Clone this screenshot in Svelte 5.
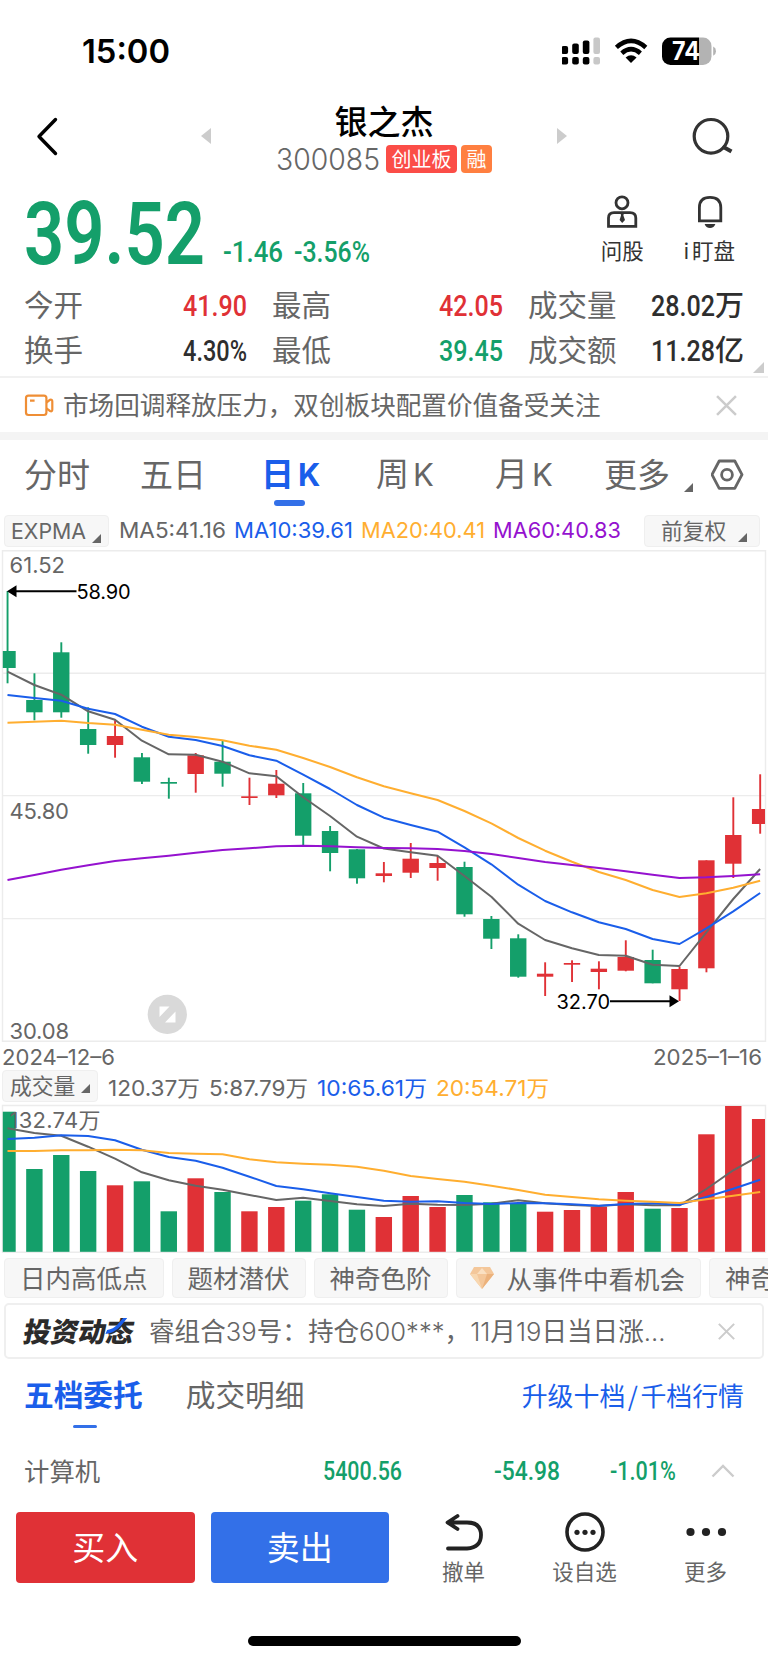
<script lang="ts">
  // one row per session: high, body top, body bottom, low, volume top
  const sessions: { up?: boolean; k: number[]; vol: number }[] = [
    { k: [591, 651, 668, 683.3], vol: 1111.7 },
    { k: [673.3, 700, 712.3, 720.3], vol: 1169 },
    { k: [642.3, 652.3, 712.3, 717.7], vol: 1155 },
    { k: [707.3, 729, 745, 753.7], vol: 1171 },
    { up: true, k: [720.3, 736, 745, 757.7], vol: 1185.3 },
    { k: [753, 757.3, 781.7, 784], vol: 1181.3 },
    { k: [777.7, 782, 783.7, 798.7], vol: 1211.3 },
    { up: true, k: [753, 755.3, 774, 792.7], vol: 1178.3 },
    { k: [741, 761.7, 773.7, 786.7], vol: 1192 },
    { up: true, k: [777.7, 796.3, 798, 805], vol: 1211.3 },
    { up: true, k: [770, 783.7, 795.3, 798], vol: 1207 },
    { k: [783, 793.3, 835.7, 845.3], vol: 1200.7 },
    { k: [826, 831, 853, 871.3], vol: 1194.3 },
    { k: [849, 849.3, 878.3, 883.7], vol: 1209.7 },
    { up: true, k: [862, 873.3, 876, 882.3], vol: 1217 },
    { up: true, k: [843, 858.7, 872.7, 878], vol: 1196 },
    { up: true, k: [856, 863, 868, 880.7], vol: 1207 },
    { k: [861.7, 867, 914.3, 916.7], vol: 1195 },
    { k: [916, 919, 938.7, 949], vol: 1202.3 },
    { k: [934.3, 938.3, 976.7, 977.7], vol: 1204 },
    { up: true, k: [962.3, 973.7, 976.7, 996], vol: 1211.7 },
    { up: true, k: [960.3, 963, 964.7, 982], vol: 1210 },
    { up: true, k: [961.3, 968.7, 972, 989.3], vol: 1206.7 },
    { up: true, k: [940.3, 957, 970.7, 971.3], vol: 1192 },
    { k: [949.7, 960, 983.3, 983.3], vol: 1208.7 },
    { up: true, k: [966.7, 969, 989.3, 1001], vol: 1208 },
    { up: true, k: [860.3, 860.3, 968.3, 972.3], vol: 1134.3 },
    { up: true, k: [797.3, 835, 863.7, 878], vol: 1106 },
    { up: true, k: [774.3, 809, 824, 833.7], vol: 1119 },
  ];

  const priceLines = [
    { name: "ma5", ys: [671.7, 685, 694.7, 711.3, 719.7, 740.7, 754.3, 754.7, 761.7, 773.3, 776.3, 797.3, 816, 836.7, 848.5, 852.3, 855.7, 876, 896.7, 923.7, 940, 948.3, 955, 955.7, 964.7, 966, 932.3, 899, 869] },
    { name: "ma10", ys: [695, 698, 700.7, 708.7, 714, 726.7, 736.7, 740, 746, 755.3, 760.7, 774.7, 789, 805, 817.7, 825, 831.7, 847.3, 864.3, 884.7, 901, 912.3, 922.3, 929, 939, 944, 928.3, 911.3, 893] },
    { name: "ma20", ys: [722.7, 721.7, 720.7, 723, 724.7, 729.7, 734.7, 737, 740.3, 745.7, 749.7, 758, 767, 777.3, 786.3, 793.3, 800, 811, 823.3, 838, 850.7, 861.7, 872, 880, 890, 897, 893.3, 887.7, 880.7] },
    { name: "ma60", ys: [880, 875, 869.7, 865.3, 861, 858.3, 855.7, 852.7, 850, 848.3, 846.3, 845.7, 846.3, 847.3, 848, 848.3, 849, 851, 854, 858, 862, 865, 868, 871.3, 874.7, 878, 877.3, 876, 874.3] },
  ];

  const volumeLines = [
    { name: "ma5", ys: [1128.3, 1133, 1135.7, 1146.7, 1158.7, 1172.3, 1180.3, 1185.7, 1189.7, 1195, 1200, 1197.7, 1201, 1204.3, 1206, 1203.7, 1204.7, 1205, 1203.7, 1200.3, 1203.3, 1205, 1206, 1204.3, 1205.3, 1205.3, 1189, 1170.3, 1155.3] },
    { name: "ma10", ys: [1139, 1137.7, 1135.3, 1136, 1140.3, 1149.7, 1157, 1160.7, 1167.7, 1176.7, 1186, 1189.3, 1193.3, 1197, 1200.7, 1201.7, 1201.3, 1203, 1204, 1203, 1203.3, 1204.3, 1205.7, 1204, 1203.3, 1204.7, 1197, 1188.7, 1179.7] },
    { name: "ma20", ys: [1151, 1151, 1150.3, 1150.3, 1149.7, 1150.3, 1153, 1153.7, 1154.3, 1159.3, 1162.3, 1163.7, 1164.7, 1166.7, 1170.7, 1176, 1179, 1181.7, 1185.7, 1190, 1194.7, 1197, 1199.3, 1200.7, 1201.7, 1203, 1199.3, 1195.7, 1192] },
  ];

  const grid = [673.3, 795.6, 918.6];

  const x = (i: number) => 7.5 + i * 26.88;
  const left = (i: number) => Math.max(x(i) - 8.2, 2.8);
  const right = (i: number) => Math.min(x(i) + 8.2, 765);
  const points = (ys: number[]) => ys.map((y, i) => `${x(i)},${y}`).join(" ");

  const periods = ["分时", "五日", "日K", "周K", "月K", "更多"];
  const tags = ["日内高低点", "题材潜伏", "神奇色阶"];
</script>

{#snippet fit(text: string, width: number, size: number, tone: string, face = "din")}
  <svg class="fit {face} {tone}" {width} height={size}>
    <text x="0" y={size * 0.86} font-size={size} textLength={width} lengthAdjust="spacingAndGlyphs">{text}</text>
  </svg>
{/snippet}

{#snippet corner()}
  <svg class="corner" width="9" height="9" viewBox="0 0 9 9"><path d="M9 0V9H0Z" /></svg>
{/snippet}

{#snippet cross(size: number)}
  <svg class="cross" width={size} height={size} viewBox="0 0 20 20"><path d="M1 1 19 19M19 1 1 19" /></svg>
{/snippet}

<main>
  <header class="status">
    {@render fit("15:00", 88, 33, "black", "sf semi")}
    <svg width="156" height="30" viewBox="562 36 156 30">
      <g>
        <rect x="561.5" y="46" width="6.6" height="8" rx="2" />
        <rect x="572.2" y="43.5" width="6.6" height="10.5" rx="2" />
        <rect x="582.8" y="40.5" width="6.6" height="13.5" rx="2" />
        <rect x="561.5" y="57" width="6.6" height="7.5" rx="2" />
        <rect x="572.2" y="57" width="6.6" height="7.5" rx="2" />
        <rect x="582.8" y="57" width="6.6" height="7.5" rx="2" />
      </g>
      <g fill="#c8c8c8">
        <rect x="593.4" y="37.5" width="6.6" height="16.5" rx="2" />
        <rect x="593.4" y="57" width="6.6" height="7.5" rx="2" />
      </g>
      <g fill="none" stroke="#000" stroke-width="4.6">
        <path d="M616.4 47.4Q631 34.4 645.8 47.4" />
        <path d="M621.8 53.2Q631 45.2 640.4 53.2" />
      </g>
      <path d="M625.6 57.4Q631 53 636.6 57.4L631 63Z" />
      <clipPath id="battery"><rect x="662" y="37.5" width="49.5" height="27.5" rx="8.5" /></clipPath>
      <g clip-path="url(#battery)">
        <rect x="662" y="37" width="37" height="29" />
        <rect x="699" y="37" width="14" height="29" fill="#b3b3b3" />
      </g>
      <path d="M713.2 46.6Q716 48 716 51.2T713.2 55.8Z" fill="#b3b3b3" />
      <text class="level" x="672" y="60" textLength="28" lengthAdjust="spacingAndGlyphs">74</text>
    </svg>
  </header>

  <nav class="title-bar">
    <svg width="24" height="40" viewBox="37 115 24 40"><path class="back" d="M56.5 118.5 40 135.5 56.5 152.5" /></svg>
    <svg class="prev" width="10" height="16"><path d="M10 0V16L0 8Z" fill="#ccc" /></svg>
    <div class="title">
      <h1>银之杰</h1>
      <div class="code">
        {@render fit("300085", 104, 30, "grey", "sf light")}
        <span class="badge board">创业板</span>
        <span class="badge margin">融</span>
      </div>
    </div>
    <svg class="next" width="10" height="16"><path d="M0 0V16L10 8Z" fill="#ccc" /></svg>
    <svg width="42" height="42" viewBox="691 114 42 42">
      <g fill="none" stroke="#333" stroke-width="3.2">
        <circle cx="711" cy="135.3" r="16.8" />
        <path d="M722.5 145.5 731.5 150.5" stroke-width="4" />
      </g>
    </svg>
  </nav>

  <section class="quote">
    <div class="price">
      {@render fit("39.52", 181, 87, "green", "din big")}
      {@render fit("-1.46", 60, 30, "green")}
      {@render fit("-3.56%", 76, 30, "green")}
    </div>
    <div class="tool ask">
      <svg width="32" height="34" viewBox="606 196 32 34" fill="none" stroke="#333" stroke-width="2.8">
        <circle cx="622" cy="203.8" r="6" />
        <path d="M608.5 227.4V219Q608.5 213.6 614 213.6H630Q635.8 213.6 635.8 219V227.4Z" />
        <path d="M620.5 213.6H624L623.4 216.5 625 221 622.2 224 619.6 221 621 216.5Z" fill="#333" stroke="none" />
      </svg>
      <span>问股</span>
    </div>
    <div class="tool watch">
      <svg width="32" height="34" viewBox="693 196 32 34" fill="none" stroke="#333" stroke-width="2.8">
        <path d="M699.4 221.8V208.5Q699.4 198.4 710 198.4T720.8 208.5V221.8Z" />
        <path d="M704.6 225H715.4Q714 229 710 229T704.6 225Z" fill="#333" stroke="none" />
      </svg>
      <span><i>i</i>盯盘</span>
    </div>
  </section>

  <section class="stats">
    <span>今开</span><b>{@render fit("41.90", 64, 30, "red")}</b>
    <span>最高</span><b>{@render fit("42.05", 64, 30, "red")}</b>
    <span>成交量</span><b>{@render fit("28.02", 64, 30, "dark")}<em>万</em></b>
    <span>换手</span><b>{@render fit("4.30%", 64, 30, "dark")}</b>
    <span>最低</span><b>{@render fit("39.45", 64, 30, "green")}</b>
    <span>成交额</span><b>{@render fit("11.28", 64, 30, "dark")}<em>亿</em></b>
    <svg class="expand" width="11" height="11"><path d="M11 0V11H0Z" fill="#ccc" /></svg>
  </section>

  <section class="notice">
    <svg width="30" height="24" viewBox="24 392 30 24" fill="none" stroke="#ef8e35" stroke-width="2.2">
      <rect x="26" y="394.6" width="20.4" height="19.4" rx="2.5" />
      <path d="M46.4 401.5 50 398.8Q52.3 398 52.3 400.5V408.5Q52.3 411 50 410L46.4 407.3M30 399.6H34.6" />
    </svg>
    <p>市场回调释放压力，双创板块配置价值备受关注</p>
    {@render cross(21)}
  </section>

  <nav class="periods">
    {#each periods as period (period)}
      <span class:active={period === "日K"}>
        {period.replace("K", "")}{#if period.endsWith("K")}<i>K</i>{/if}
      </span>
    {/each}
    {@render corner()}
    <svg class="gear" width="34" height="32" viewBox="711 459 34 32" fill="none" stroke="#666" stroke-width="2.8">
      <path d="M719.2 461H734.8L742 474.7 734.8 488.4H719.2L712 474.7Z" stroke-linejoin="round" />
      <circle cx="727" cy="474.7" r="5.4" />
    </svg>
  </nav>

  <div class="averages">
    <button class="pick expma">{@render fit("EXPMA", 75, 22, "grey", "sf")}{@render corner()}</button>
    {@render fit("MA5:41.16", 107, 22, "grey", "sf")}
    {@render fit("MA10:39.61", 119, 22, "blue", "sf")}
    {@render fit("MA20:40.41", 124, 22, "orange", "sf")}
    {@render fit("MA60:40.83", 128, 22, "purple", "sf")}
    <button class="pick adjust">前复权{@render corner()}</button>
  </div>

  <svg class="chart" width="768" height="497" viewBox="0 549 768 497">
    <path class="frame" d="M2.5 550.8H765.5V1041.3H2.5Z" />
    {#each grid as y (y)}
      <path class="rule" d="M3 {y}H765" />
    {/each}
    {#each sessions as s, i (i)}
      <g class={s.up ? "up" : "down"}>
        <rect x={x(i) - 0.9} y={s.k[0]} width="1.9" height={s.k[3] - s.k[0]} />
        <rect x={left(i)} y={s.k[1]} width={right(i) - left(i)} height={s.k[2] - s.k[1]} />
      </g>
    {/each}
    {#each priceLines as line (line.name)}
      <polyline class={line.name} points={points(line.ys)} />
    {/each}
    <g class="axis">
      <text x="9.5" y="573.2" textLength="55.5">61.52</text>
      <text x="9.5" y="818.8" textLength="59.5">45.80</text>
      <text x="9.5" y="1038.6" textLength="59.5">30.08</text>
    </g>
    <g class="mark">
      <path d="M14 591.3H76.5M610 1001.2H672" />
      <path d="M7 591.3 16.5 585.3V597.3ZM679 1001.2 669.5 995.2V1007.2Z" />
      <text x="76.5" y="599.2" textLength="54">58.90</text>
      <text x="556.5" y="1008.8" textLength="53.5">32.70</text>
    </g>
    <circle cx="167.3" cy="1014.3" r="19.6" fill="#d9d9d9" />
    <path d="M159.5 1006.5H169.5L159.5 1017ZM175.5 1011.5V1022.5H165Z" fill="#fff" />
  </svg>

  <div class="dates">
    {@render fit("2024–12–6", 113, 22, "grey", "sf")}
    {@render fit("2025–1–16", 109, 22, "grey", "sf")}
  </div>

  <div class="volumes">
    <button class="pick volume">成交量{@render corner()}</button>
    {@render fit("120.37万", 92, 22, "grey", "sf")}
    {@render fit("5:87.79万", 99, 22, "grey", "sf")}
    {@render fit("10:65.61万", 110, 22, "blue", "sf")}
    {@render fit("20:54.71万", 113, 22, "orange", "sf")}
  </div>

  <svg class="chart" width="768" height="152" viewBox="0 1102 768 152">
    <path class="frame" d="M2.5 1105.5H765.5V1252.3H2.5Z" />
    {#each sessions as s, i (i)}
      <rect class={s.up ? "up" : "down"} x={left(i)} y={s.vol} width={right(i) - left(i)} height={1251.8 - s.vol} />
    {/each}
    <g class="axis"><text x="9.5" y="1128" textLength="91">132.74万</text></g>
    {#each volumeLines as line (line.name)}
      <polyline class={line.name} points={points(line.ys)} />
    {/each}
  </svg>

  <div class="tags">
    {#each tags as tag (tag)}
      <span>{tag}</span>
    {/each}
    <span class="event">
      <svg width="24" height="22" viewBox="0 0 24 22">
        <path d="M4 0H20L24 7 12 22 0 7Z" fill="#f4c79a" />
        <path d="M0 7H7L12 22Z" fill="#f8d7b0" />
        <path d="M17 7H24L12 22Z" fill="#ecb27c" />
        <path d="M7 7 12 1 17 7Z" fill="#fae0c2" />
      </svg>
      从事件中看机会
    </span>
    <span>神奇</span>
  </div>

  <div class="news">
    <strong>投资动态
      <svg width="22" height="18" viewBox="0 0 22 18"><path d="M17 0H21L16 8Q11 15 2 16L3 12Q9 11 12 7Z" /></svg>
    </strong>
    <p>睿组合<i>39</i>号：持仓<i>600***</i>，<i>11</i>月<i>19</i>日当日涨<i>...</i></p>
    {@render cross(17)}
  </div>

  <nav class="depth">
    <span class="active">五档委托</span>
    <span>成交明细</span>
    <a href="#upgrade">升级十档<i>/</i>千档行情</a>
  </nav>

  <div class="sector">
    <span>计算机</span>
    {@render fit("5400.56", 79, 25.5, "green")}
    {@render fit("-54.98", 66, 25.5, "green")}
    {@render fit("-1.01%", 66, 25.5, "green")}
    <svg width="24" height="14" viewBox="0 0 24 14"><path d="M1.5 12.5 12 2 22.5 12.5" fill="none" stroke="#ccc" stroke-width="2.4" /></svg>
  </div>

  <footer>
    <button class="trade buy">买入</button>
    <button class="trade sell">卖出</button>
    <div class="action">
      <svg width="42" height="42" viewBox="445 1511 42 42" fill="none" stroke="#222" stroke-width="3.8" stroke-linecap="round" stroke-linejoin="round">
        <path d="M459.5 1516 449.5 1522.5 459.5 1529M450 1522.5H469Q483 1522.5 483 1535T469 1548.5H450" />
      </svg>
      <span>撤单</span>
    </div>
    <div class="action">
      <svg width="42" height="42" viewBox="0 0 42 42" fill="#222">
        <circle cx="21" cy="21" r="18" fill="none" stroke="#222" stroke-width="3.6" />
        <circle cx="13" cy="21.3" r="2.6" /><circle cx="21" cy="21.3" r="2.6" /><circle cx="29" cy="21.3" r="2.6" />
      </svg>
      <span>设自选</span>
    </div>
    <div class="action">
      <svg width="42" height="42" viewBox="0 0 42 42" fill="#222">
        <circle cx="5.5" cy="21" r="4.1" /><circle cx="21" cy="21" r="4.1" /><circle cx="37" cy="21" r="4.1" />
      </svg>
      <span>更多</span>
    </div>
  </footer>
  <div class="home"></div>
</main>

<style>
  :global(body) {
    background: #fff;
  }
  main {
    width: 768px;
    height: 1663px;
    overflow: hidden;
    display: flex;
    flex-direction: column;
    font-family: "Noto Sans CJK SC", "Noto Sans", sans-serif;
    color: #666;
    line-height: 1;
  }
  main > * {
    flex-shrink: 0;
    box-sizing: border-box;
  }
  svg {
    display: block;
    flex-shrink: 0;
  }
  i,
  em {
    font-style: normal;
  }
  p,
  h1 {
    margin: 0;
  }
  button {
    border: 0;
    padding: 0;
    color: inherit;
    font: inherit;
  }

  .fit {
    overflow: visible;
    fill: currentColor;
  }
  .din {
    font-family: Roboto, "Noto Sans CJK SC", sans-serif;
    font-weight: 500;
  }
  .big {
    font-weight: 600;
  }
  .sf {
    font-family: Inter, "Noto Sans CJK SC", sans-serif;
    font-weight: 400;
  }
  .semi {
    font-weight: 600;
  }
  .light {
    font-weight: 300;
  }
  .black { color: #000; }
  .dark { color: #2e2e2e; }
  .grey { color: #666; }
  .green { color: #149f6a; }
  .red { color: #e03136; }
  .blue { color: #1a5eea; }
  .orange { color: #ffae30; }
  .purple { color: #9512cf; }
  .corner {
    fill: #666;
  }
  .cross {
    fill: none;
    stroke: #ccc;
    stroke-width: 2.4;
  }

  .status {
    display: flex;
    justify-content: space-between;
    align-items: center;
    height: 102px;
    padding: 0 50px 0 82px;
  }
  .level {
    fill: #fff;
    font: 700 25px Inter, sans-serif;
  }

  .title-bar {
    display: grid;
    grid-template-columns: 165px 10px 346px 126px 50px;
    grid-template-rows: 67px;
    align-items: center;
    height: 67px;
    padding: 0 35px 0 36px;
  }
  .title-bar > :last-child {
    justify-self: end;
  }
  .back {
    fill: none;
    stroke: #000;
    stroke-width: 3.4;
    stroke-linecap: round;
    stroke-linejoin: round;
  }
  .title {
    display: flex;
    flex-direction: column;
    align-items: center;
    gap: 7px;
    margin-top: 7px;
  }
  h1 {
    color: #000;
    font-size: 33px;
    font-weight: 500;
  }
  .code {
    display: flex;
    align-items: center;
    gap: 4px;
  }
  .badge {
    height: 28px;
    padding: 0 5.5px;
    border-radius: 4px;
    color: #fff;
    font-size: 20px;
    line-height: 27px;
  }
  .board {
    margin-left: 2px;
    background: #fb4d47;
  }
  .margin {
    background: #ff7f40;
  }

  .quote {
    display: flex;
    height: 111px;
    padding: 26px 33px 0 24px;
  }
  .price {
    display: flex;
    align-items: flex-end;
    flex: 1;
    height: 75px;
    gap: 11px;
  }
  .price .fit {
    margin-bottom: 4px;
  }
  .price .fit:first-child {
    margin: 0 7px -6px 0;
  }
  .tool {
    display: flex;
    flex-direction: column;
    align-items: center;
    gap: 10px;
    color: #333;
    font-size: 21.5px;
  }
  .tool i {
    margin-right: 3px;
    font-family: Inter, sans-serif;
  }
  .watch {
    margin-left: 40px;
  }

  .stats {
    display: grid;
    grid-template-columns: 60px 163px 85px 171px 115px 126px;
    grid-auto-rows: 45px;
    align-items: center;
    height: 98px;
    padding: 2px 0 0 24px;
    border-bottom: 2px solid #f1f1f1;
    position: relative;
  }
  .stats span {
    font-size: 29.5px;
    line-height: 42px;
    padding-bottom: 3px;
  }
  .stats > span:nth-of-type(3n + 2),
  .stats > span:nth-of-type(3n) {
    padding-left: 25px;
    white-space: nowrap;
  }
  .stats b {
    display: flex;
    justify-content: flex-end;
    align-items: center;
  }
  .stats em {
    padding-bottom: 2px;
    color: #2e2e2e;
    font-size: 29px;
    font-weight: 500;
  }
  .expand {
    position: absolute;
    right: 4px;
    bottom: 3px;
  }

  .notice {
    display: flex;
    align-items: center;
    height: 62px;
    padding: 0 31px 0 24px;
    border-bottom: 8px solid #f4f4f4;
  }
  .notice p {
    flex: 1;
    margin-left: 9px;
    padding-bottom: 3px;
    font-size: 25.6px;
  }

  .periods {
    display: grid;
    grid-template-columns: 116px 121px 115px 119px 109px 80px 27px 34px;
    align-items: center;
    height: 72px;
    padding: 0 0 6px 24px;
    font-size: 33px;
  }
  .periods span {
    position: relative;
    white-space: nowrap;
    line-height: 60px;
  }
  .periods i {
    margin-left: 4px;
    font-size: 31px;
    font-family: Inter, sans-serif;
  }
  .periods .active {
    color: #1a5eea;
    font-weight: 700;
  }
  .periods .active::after,
  .depth .active::after {
    content: "";
    position: absolute;
    left: 13px;
    bottom: -1px;
    width: 31px;
    height: 6px;
    border-radius: 3px;
    background: #3370e8;
  }
  .periods .corner {
    margin-top: 28px;
  }
  .gear {
    margin-top: 4px;
  }

  .averages {
    display: flex;
    align-items: center;
    gap: 8px;
    height: 37px;
    padding: 0 8px 0 4px;
  }
  .averages > .fit {
    margin-top: -2px;
  }
  .pick {
    display: flex;
    align-items: center;
    justify-content: space-between;
    box-sizing: border-box;
    height: 32px;
    border: 1px solid #efefef;
    border-radius: 4px;
    background: #f7f7f7;
    font-size: 21.8px;
    line-height: 30px;
  }
  .pick .corner {
    margin-top: 16px;
  }
  .expma {
    width: 105px;
    padding: 0 7px 0 6px;
    margin-right: 2px;
  }
  .adjust {
    width: 116px;
    margin-left: auto;
    padding: 0 12px 2px 16px;
  }

  .frame,
  .rule {
    fill: none;
    stroke: #ececec;
    stroke-width: 1.4;
  }
  .up { fill: #e03136; }
  .down { fill: #149f6a; }
  polyline {
    fill: none;
    stroke-width: 2;
    stroke-linejoin: round;
  }
  .ma5 { stroke: #666; }
  .ma10 { stroke: #1a5eea; }
  .ma20 { stroke: #ffae30; }
  .ma60 { stroke: #9512cf; }
  .axis text {
    fill: #666;
    font: 22px Inter, "Noto Sans CJK SC", sans-serif;
  }
  .mark {
    stroke: #000;
    stroke-width: 2;
  }
  .mark path + path {
    stroke: none;
  }
  .mark text {
    stroke: none;
    font: 20px Inter, sans-serif;
  }

  .dates {
    display: flex;
    justify-content: space-between;
    height: 23px;
    padding: 0 6px 0 2px;
  }
  .volumes {
    display: flex;
    align-items: center;
    gap: 9px;
    height: 33px;
    padding-left: 2px;
  }
  .volume {
    width: 96px;
    padding: 0 7px 2px;
    margin-right: 1px;
  }
  .volume .corner {
    margin-top: 7px;
  }
  .volumes .fit {
    margin-top: 5px;
  }

  .tags {
    display: flex;
    gap: 8px;
    height: 49px;
    padding: 4px 0 0 4px;
    overflow: hidden;
  }
  .tags span {
    flex-shrink: 0;
    box-sizing: border-box;
    height: 40px;
    padding: 0 15px;
    border: 1px solid #efefef;
    border-radius: 4px;
    background: #f7f7f7;
    font-size: 25.5px;
    line-height: 36px;
    white-space: nowrap;
  }
  .tags .event {
    display: flex;
    align-items: center;
    gap: 13px;
    padding: 0 15px 0 13px;
  }

  .news {
    display: flex;
    align-items: center;
    height: 56px;
    margin: 0 4px;
    padding: 0 27px 0 18px;
    border: 2px solid #efefef;
    border-radius: 5px;
  }
  .news strong {
    position: relative;
    width: 125px;
    color: #2b2b2b;
    font-size: 27.5px;
    font-weight: 900;
    transform: skewX(-10deg);
    white-space: nowrap;
  }
  .news strong svg {
    position: absolute;
    left: 80px;
    top: 1px;
    fill: #1a5eea;
  }
  .news p {
    flex: 1;
    font-size: 25.6px;
    white-space: nowrap;
  }
  .news i {
    font-family: Inter, sans-serif;
    font-weight: 350;
  }

  .depth {
    display: flex;
    align-items: center;
    height: 72px;
    padding: 0 24px;
    font-size: 29.7px;
  }
  .depth span {
    position: relative;
    margin-right: 43px;
    line-height: 64px;
    padding-bottom: 2px;
  }
  .depth .active {
    color: #1a5eea;
    font-weight: 700;
  }
  .depth .active::after {
    left: 49px;
    width: 24px;
    height: 3px;
    bottom: 0;
  }
  .depth a {
    margin-left: auto;
    color: #1a5eea;
    font-size: 25.9px;
    text-decoration: none;
  }
  .depth i {
    margin: 0 2.5px;
  }

  .sector {
    display: grid;
    grid-template-columns: 299px 171px 116px 101px 24px;
    align-items: center;
    height: 78px;
    padding: 1px 0 0 24px;
    font-size: 25.4px;
  }

  footer {
    display: flex;
    align-items: flex-start;
    height: 126px;
    padding: 3px 0 0 16px;
  }
  .trade {
    flex-shrink: 0;
    width: 178.5px;
    height: 71px;
    margin-right: 16px;
    padding-bottom: 2px;
    border-radius: 4px;
    color: #fff;
    font-size: 33px;
  }
  .buy { background: #e03136; }
  .sell {
    margin-right: 14px;
    background: #3370e8;
  }
  .action {
    display: flex;
    flex-shrink: 0;
    flex-direction: column;
    align-items: center;
    gap: 7px;
    width: 121px;
    font-size: 21.5px;
  }
  .action svg {
    margin-top: -1px;
  }
  .home {
    width: 273px;
    height: 10px;
    margin: 1px auto 0;
    border-radius: 5px;
    background: #000;
  }
</style>
